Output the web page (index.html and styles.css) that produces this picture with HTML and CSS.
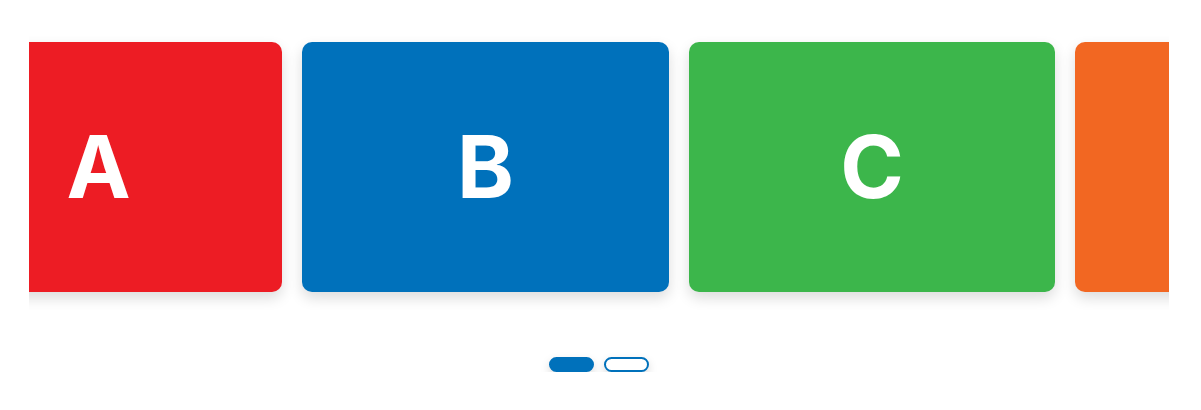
FILE: index.html
```html
<!DOCTYPE html>
<html lang="en">
<head>
<meta charset="utf-8">
<title>Carousel</title>
<link rel="stylesheet" href="styles.css">
</head>
<body>
<div class="page">
  <div class="carousel">
    <div class="track" style="margin-left:-113.67px">
      <div class="card red">A</div>
      <div class="card blue">B</div>
      <div class="card green">C</div>
      <div class="card orange">D</div>
    </div>
  </div>
  <div class="dots">
    <span class="dot active"></span>
    <span class="dot"></span>
  </div>
</div>
</body>
</html>
```
FILE: styles.css
```css
html, body {
  margin: 0;
  background: #ffffff;
  font-family: Inter, "Liberation Sans", Arial, sans-serif;
}
.page {
  padding: 0 32px 0 29px;
}
.carousel {
  overflow: hidden;
  padding: 42px 0 25px;
}
.track {
  display: flex;
  gap: 20px;
}
.card {
  flex: 0 0 calc((1140px - 40px) / 3);
  height: 250px;
  border-radius: 10px;
  display: flex;
  align-items: center;
  justify-content: center;
  color: #ffffff;
  font-size: 86px;
  font-weight: 700;
  line-height: 1;
  box-shadow: 0 6px 14px rgba(0, 0, 0, 0.14);
}
.red { background: #ed1c24; }
.blue { background: #0071bb; }
.green { background: #3cb64b; }
.orange { background: #f26722; }
.dots {
  margin-top: 40px;
  display: flex;
  justify-content: center;
  gap: 10px;
}
.dot {
  box-sizing: border-box;
  width: 45px;
  height: 15px;
  border-radius: 8px;
  border: 2px solid #0071bb;
  background: #ffffff;
  box-shadow: 0 4px 10px rgba(0, 0, 0, 0.15);
}
.dot.active {
  background: #0071bb;
}
```
